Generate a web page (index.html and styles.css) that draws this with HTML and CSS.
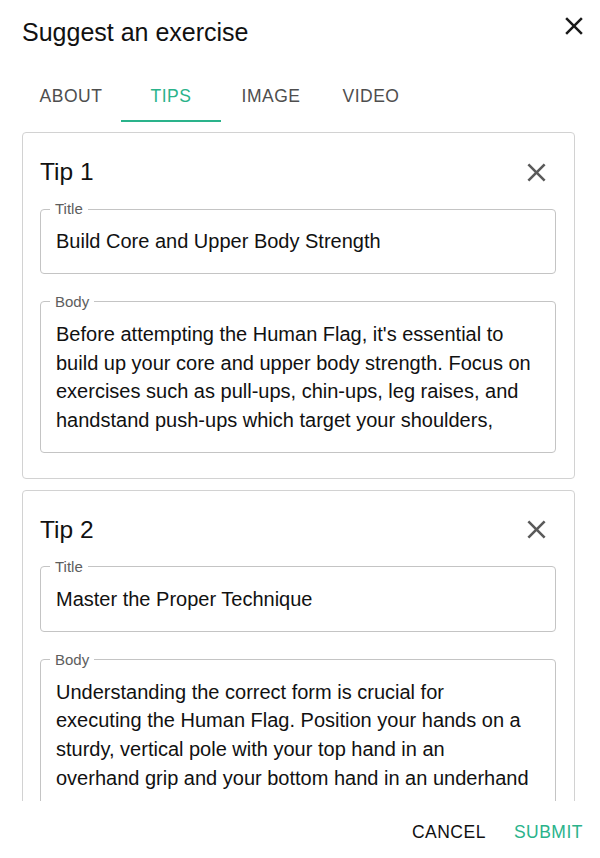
FILE: index.html
```html
<!DOCTYPE html>
<html lang="en">
<head>
<meta charset="utf-8">
<title>Suggest an exercise</title>
<link rel="stylesheet" href="styles.css">
</head>
<body>
<div class="dialog">
  <header class="dialog-header">
    <h1 class="dialog-title">Suggest an exercise</h1>
    <button class="icon-btn close-main" aria-label="Close">
      <svg viewBox="0 0 24 24" width="30" height="30"><path d="M19 6.41 17.59 5 12 10.59 6.41 5 5 6.41 10.59 12 5 17.59 6.41 19 12 13.41 17.59 19 19 17.59 13.41 12z"/></svg>
    </button>
  </header>
  <nav class="tabs">
    <div class="tab">About</div>
    <div class="tab active">Tips</div>
    <div class="tab">Image</div>
    <div class="tab">Video</div>
  </nav>
  <main class="content">
    <section class="card">
      <div class="card-head">
        <h2 class="card-title">Tip 1</h2>
        <button class="icon-btn card-close" aria-label="Remove tip">
          <svg viewBox="0 0 24 24" width="31" height="31"><path d="M19 6.41 17.59 5 12 10.59 6.41 5 5 6.41 10.59 12 5 17.59 6.41 19 12 13.41 17.59 19 19 17.59 13.41 12z"/></svg>
        </button>
      </div>
      <fieldset class="field">
        <legend class="field-label">Title</legend>
        <div class="field-input">Build Core and Upper Body Strength</div>
      </fieldset>
      <fieldset class="field field-body">
        <legend class="field-label">Body</legend>
        <div class="field-input multiline">Before attempting the Human Flag, it's essential to<br>build up your core and upper body strength. Focus on<br>exercises such as pull-ups, chin-ups, leg raises, and<br>handstand push-ups which target your shoulders,</div>
      </fieldset>
    </section>
    <section class="card">
      <div class="card-head">
        <h2 class="card-title">Tip 2</h2>
        <button class="icon-btn card-close" aria-label="Remove tip">
          <svg viewBox="0 0 24 24" width="31" height="31"><path d="M19 6.41 17.59 5 12 10.59 6.41 5 5 6.41 10.59 12 5 17.59 6.41 19 12 13.41 17.59 19 19 17.59 13.41 12z"/></svg>
        </button>
      </div>
      <fieldset class="field">
        <legend class="field-label">Title</legend>
        <div class="field-input">Master the Proper Technique</div>
      </fieldset>
      <fieldset class="field field-body">
        <legend class="field-label">Body</legend>
        <div class="field-input multiline">Understanding the correct form is crucial for<br>executing the Human Flag. Position your hands on a<br>sturdy, vertical pole with your top hand in an<br>overhand grip and your bottom hand in an underhand</div>
      </fieldset>
    </section>
  </main>
  <footer class="actions">
    <button class="btn">Cancel</button>
    <button class="btn primary">Submit</button>
  </footer>
</div>
</body>
</html>
```

FILE: styles.css
```css
* { box-sizing: border-box; }
html, body { margin: 0; padding: 0; background: #fff; }
body {
  font-family: "Liberation Sans", Arial, sans-serif;
  color: #1f1f1f;
}
.dialog {
  width: 600px;
  height: 858px;
  display: flex;
  flex-direction: column;
  overflow: hidden;
}
.dialog-header {
  display: flex;
  justify-content: space-between;
  align-items: flex-start;
  padding: 18px 11px 0 22px;
  height: 72px;
}
.dialog-title {
  margin: 0;
  font-size: 25px;
  font-weight: 400;
  line-height: 28px;
  color: #111;
}
.icon-btn {
  border: 0;
  background: none;
  padding: 0;
  margin: 0;
  display: flex;
  align-items: center;
  justify-content: center;
  cursor: pointer;
}
.close-main { margin-top: -7px; }
.close-main svg { fill: #1a1a1a; }
.tabs {
  display: flex;
  padding-left: 21px;
  height: 50px;
}
.tab {
  width: 100px;
  height: 50px;
  display: flex;
  align-items: center;
  justify-content: center;
  padding-top: 1px;
  font-size: 17.5px;
  letter-spacing: 0.5px;
  text-transform: uppercase;
  color: #4e4e4e;
  border-bottom: 2px solid transparent;
}
.tab.active {
  color: #2ab38b;
  border-bottom-color: #2ab38b;
}
.content {
  height: 679px;
  overflow: hidden;
  padding: 10px 25px 0 22px;
  display: flex;
  flex-direction: column;
  gap: 11px;
  flex-shrink: 0;
}
.card {
  border: 1px solid #d2d2d2;
  border-radius: 4px;
  padding: 17px 18px 25px 17px;
  flex-shrink: 0;
}
.card-head {
  display: flex;
  justify-content: space-between;
  align-items: center;
  height: 44px;
  margin-bottom: 6px;
}
.card-title {
  margin: 0;
  font-size: 24.5px;
  font-weight: 400;
  color: #111;
}
.card-close {
  width: 40px;
  height: 40px;
}
.card-close svg { fill: #5a5a5a; }
.field {
  margin: 0;
  border: 1px solid #c4c4c4;
  border-radius: 4px;
  padding: 0 15px;
  min-width: 0;
}
.field-body { margin-top: 19px; }
.field-label {
  font-size: 15px;
  line-height: 18px;
  color: #5e5e5e;
  padding: 0 5px;
  margin-left: -6px;
}
.field-input {
  font-size: 20px;
  line-height: 28.75px;
  color: #111;
  padding: 9px 0 17px;
  white-space: nowrap;
}
.field-input.multiline {
  padding: 0;
  margin: 9px 0 17px;
  height: 115px;
  overflow: hidden;
}
.actions {
  flex: 1;
  display: flex;
  justify-content: flex-end;
  align-items: center;
  gap: 28px;
  padding: 6px 17px 0 0;
}
.btn {
  border: 0;
  background: none;
  padding: 0;
  font-family: inherit;
  font-size: 17.5px;
  letter-spacing: 0.5px;
  text-transform: uppercase;
  color: #111;
  cursor: pointer;
}
.btn.primary { color: #2ab38b; }
```
